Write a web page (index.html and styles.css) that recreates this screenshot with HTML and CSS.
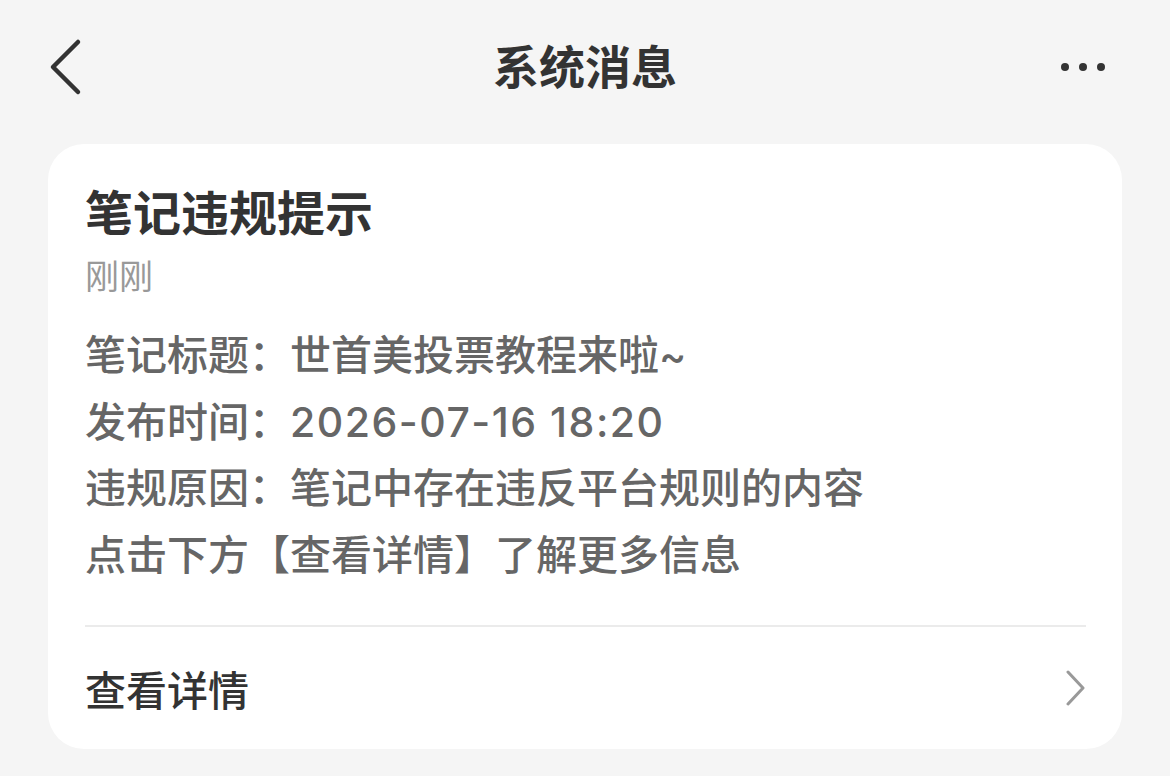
FILE: index.html
```html
<!DOCTYPE html>
<html lang="zh-CN">
<head>
    <meta charset="UTF-8">
    <meta name="viewport" content="width=device-width, initial-scale=1.0">
    <title>系统消息</title>
    <link rel="stylesheet" href="styles.css">
</head>
<body>
    <div class="nav-bar">
        <a class="nav-back" href="#">
            <svg width="40" height="60" viewBox="0 0 40 60">
                <polyline points="30,6 5,31 30,56" fill="none" stroke="#333" stroke-width="4.5" stroke-linecap="round" stroke-linejoin="round"/>
            </svg>
        </a>
        <h1 class="nav-title">系统消息</h1>
        <a class="nav-more" href="#">
            <span class="dot"></span><span class="dot"></span><span class="dot"></span>
        </a>
    </div>

    <div class="msg-card">
        <div class="msg-body">
            <h2 class="msg-title">笔记违规提示</h2>
            <div class="msg-time">刚刚</div>
            <div class="msg-text">
                <p>笔记标题：世首美投票教程来啦~</p>
                <p>发布时间：<span class="msg-num">2026-07-16 18:20</span></p>
                <p>违规原因：笔记中存在违反平台规则的内容</p>
                <p>点击下方【查看详情】了解更多信息</p>
            </div>
        </div>
        <a class="msg-link" href="#">
            <span>查看详情</span>
            <svg width="24" height="36" viewBox="0 0 24 36">
                <polyline points="4,2 19,18 4,34" fill="none" stroke="#999" stroke-width="3" stroke-linecap="round" stroke-linejoin="round"/>
            </svg>
        </a>
    </div>
</body>
</html>
```

FILE: styles.css
```css
body {
    margin: 0;
    background-color: #f5f5f5;
    font-family: "Noto Sans CJK SC", "Noto Sans", sans-serif;
    color: #333;
}
a {
    text-decoration: none;
    color: inherit;
}
.nav-bar {
    height: 134px;
    display: flex;
    align-items: center;
    justify-content: space-between;
    padding: 0 65px 0 48px;
    position: relative;
}
.nav-back {
    display: flex;
    margin-top: -2px;
}
.nav-title {
    position: absolute;
    left: 0;
    right: 0;
    text-align: center;
    margin: 0;
    margin-top: -6px;
    font-size: 46px;
    font-weight: 700;
    color: #333;
    pointer-events: none;
}
.nav-more {
    display: flex;
    gap: 10px;
}
.dot {
    width: 8px;
    height: 8px;
    border-radius: 50%;
    background-color: #333;
}
.msg-card {
    margin: 10px 48px 0;
    background-color: white;
    border-radius: 36px;
    padding: 0 36px 0 37px;
}
.msg-body {
    padding-top: 34px;
    padding-bottom: 37px;
    border-bottom: 2px solid #ebebeb;
}
.msg-title {
    margin: 0;
    font-size: 48px;
    line-height: 64px;
    font-weight: 700;
    color: #333;
}
.msg-time {
    margin-top: 9px;
    font-size: 34px;
    line-height: 48px;
    color: #999;
}
.msg-text {
    margin-top: 23px;
    font-family: "Inter", "Noto Sans CJK SC", sans-serif;
    font-size: 41px;
    font-weight: 500;
    color: #666;
}
.msg-text p {
    margin: 0;
    line-height: 66.5px;
}
.msg-num {
    letter-spacing: 1.5px;
}
.msg-link {
    height: 122px;
    display: flex;
    align-items: center;
    justify-content: space-between;
    font-size: 41px;
    font-weight: 500;
    color: #333;
}
.msg-link svg {
    margin-right: -2px;
}
```
